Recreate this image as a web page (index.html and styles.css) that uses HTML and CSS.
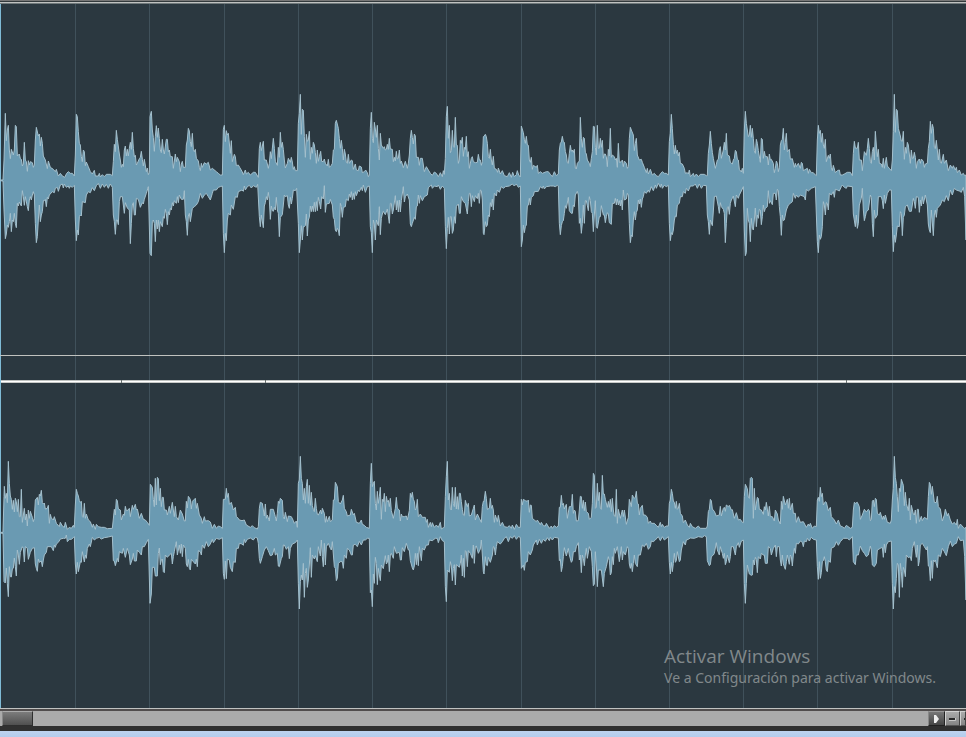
FILE: index.html
```
<!DOCTYPE html>
<html lang="es">
<head>
<meta charset="utf-8">
<title>Editor de audio</title>
<link rel="stylesheet" href="styles.css">
</head>
<body>
<main class="editor">
  <div class="topline"></div>
  <section class="tracks">
    <svg class="grid" viewBox="0 0 966 704" preserveAspectRatio="none" aria-hidden="true">
      <path d="M75.500 0V704M149.500 0V704M224.500 0V704M298.500 0V704M372.500 0V704M446.500 0V704M521.500 0V704M595.500 0V704M669.500 0V704M743.500 0V704M817.500 0V704M892.500 0V704"/>
    </svg>
    <div class="lane first">
      <svg class="wave" viewBox="0 0 2898 570" preserveAspectRatio="none" role="img" aria-label="Canal izquierdo"><path id="left"/></svg>
    </div>
    <div class="gap"></div>
    <div class="divider"><i></i><i></i><i></i></div>
    <div class="lane second">
      <svg class="wave" viewBox="0 0 2898 570" preserveAspectRatio="none" role="img" aria-label="Canal derecho"><path id="right"/></svg>
    </div>
    <aside class="notice">
      <p class="title">Activar Windows</p>
      <p class="detail">Ve a Configuración para activar Windows.</p>
    </aside>
  </section>
  <footer class="scroll">
    <button class="thumb" aria-label="Desplazar"></button>
    <div class="rail"></div>
    <button class="arrow" aria-label="Derecha"><svg viewBox="0 0 16 14"><path d="M6 3L8 3L11 7L8 11L6 11Z"/></svg></button>
    <button class="zoom" aria-label="Alejar"><svg viewBox="0 0 14 14"><path class="hi" d="M4 8.500H10.500V6"/><path d="M4 6H10V8H4Z"/></svg></button>
    <button class="zoom cut" aria-label="Acercar"><svg viewBox="0 0 14 14"><path d="M4 6H10V8H4Z"/></svg></button>
  </footer>
  <div class="shade"></div>
  <div class="taskbar"></div>
</main>
<script src="wave.js"></script>
</body>
</html>
```
FILE: styles.css
```
* { box-sizing: border-box; }
body { margin: 0; background: #2b3840; font-family: "Noto Sans", "Open Sans", sans-serif; }
button { padding: 0; border: 0; }
svg { display: block; }
.editor { display: flex; flex-direction: column; min-height: 100vh; overflow: hidden; }
.topline { height: 4px; background: linear-gradient(#777 0 1px, #333a3c 1px 2px, #c0c2c1 2px 3px, #70797b 3px); }
.tracks { position: relative; flex: 1; display: flex; flex-direction: column; border-left: 1px solid #7fbbd6; background: #2b3840; }
.grid { position: absolute; top: 0; left: -1px; width: calc(100% + 1px); height: 100%; fill: none; stroke: #40515b; stroke-width: 1; }
.lane { position: relative; display: flex; flex-direction: column; margin-left: -1px; }
.first { flex: 351; padding-top: 76px; border-bottom: 1px solid #c0c2bf; }
.second { flex: 325; padding-top: 57px; }
.wave { width: 100%; height: 190px; fill: #6a9ab2; stroke: #a4c0cd; stroke-width: 1px; stroke-linejoin: round; }
.wave path { vector-effect: non-scaling-stroke; }
.gap { height: 24px; }
.divider { position: relative; height: 3px; display: grid; grid-template-columns: 121fr 144fr 581fr 119fr; background: linear-gradient(#bfc2c0 0 1px, #fff 1px 2px, #c8cac8 2px); }
.divider i { border-right: 1px solid #68706f; }
.notice { position: absolute; right: 30px; bottom: 20px; color: #81888b; }
.notice p { margin: 0; white-space: nowrap; }
.title { font-size: 19px; line-height: 24px; font-family: "Open Sans", sans-serif; }
.detail { font-size: 14px; line-height: 20px; font-family: "Noto Sans", sans-serif; }
.scroll { display: flex; height: 18px; padding-left: 2px; border-top: 1px solid #c0c2c1; background: #ababab; box-shadow: inset 0 2px #514d4d; padding-top: 2px; }
.thumb { width: 31px; border: 1px solid #2e2e2e; border-top-color: #aaa; border-left-color: #888; background: linear-gradient(#7c7c7c, #505050); }
.rail { flex: 1; background: #ababab; }
.arrow { width: 17px; border: 1px solid #222; border-top-color: #999; border-left-color: #888; background: linear-gradient(#777, #454545); }
.arrow svg { width: 16px; height: 14px; margin: -1px; fill: #eee; }
.zoom { width: 15px; border: 1px solid #d0d0d0; border-right-color: #444; border-bottom-color: #555; background: linear-gradient(#aaa, #858585); overflow: hidden; }
.zoom svg { width: 14px; height: 14px; margin: -1px; fill: #292929; }
.zoom .hi { fill: none; stroke: #c8c8c8; }
.cut { width: 6px; }
.shade { height: 5px; background: #303030; }
.taskbar { height: 6px; background: linear-gradient(#bed3ef, #b3ccec); }
```
FILE: wave.js
```
// Each segment: [x offset, upper peaks, lower peaks], three units per sample.
const left = [
[0,
"0,300 9,300 12,240 16,100 19,182 22,150 25,136 28,210 31,236 34,208 40,225 43,210 46,136 49,140 52,228 58,222 61,236 64,238 67,258 70,252 73,187 76,240 79,245 82,274 85,242 88,255 91,245 97,248 100,262 103,255 106,180 109,142 115,168 118,162 121,198 124,172 127,190 130,228 136,240 142,266 145,243 151,262 160,268 166,275 169,268 175,288 181,280 187,288 194,292 200,280 205,275 211,280 217,280 223,288 226,225 229,103 232,110 235,155 238,190 241,195 244,230 247,245 250,210 253,215 256,257 259,246 265,260 271,275 277,282 283,271 286,288 295,288 298,280 301,291 307,284 313,290 319,283 331,283 337,287 340,245 343,193 346,215 349,151 352,178 358,222 361,240 364,262 367,253 370,260 373,210 376,198 379,228 382,208 385,228 388,205 391,187 394,208 397,157 400,205 403,230 406,226 409,255 412,250 418,236 421,232 424,214 427,238 430,258 433,238 439,275 442,264 445,284 448,278 450,110 454,94 457,150 460,172 463,214 466,170 469,137 472,172 475,144 478,175 481,210 484,218 487,178 490,210 493,222 499,178 502,178 505,215 508,210 511,230 517,230 520,265 526,222 529,245 532,232 538,245 541,275 544,252 547,244 550,262 556,262 559,195 562,180 565,145 568,153 571,185 574,200 577,160 580,208 583,215 586,208 589,235 595,243 598,262 601,272 604,250 607,262 613,248 619,252 625,247 631,270 637,265 649,275 655,280 661,285 667,285 670,148 673,136 676,185 679,152 682,165 685,160 691,220 694,182 697,245 703,223 706,230 709,257 715,255 719,262",
"0,302 9,303 12,390 16,476 19,462 22,435 25,442 28,425 31,400 34,455 37,420 40,425 43,400 46,430 49,443 52,370 55,378 58,366 64,378 67,332 70,350 73,376 76,350 82,380 85,392 88,360 91,350 94,360 97,345 100,335 103,345 106,430 109,488 112,470 115,420 118,375 121,425 124,405 127,395 130,362 133,362 136,358 139,380 142,352 145,357 148,345 157,335 163,338 166,325 172,322 175,334 181,315 187,312 190,324 193,312 199,322 205,318 208,325 211,318 217,322 223,316 226,420 229,482 232,450 235,465 238,410 241,405 244,408 247,365 256,368 259,345 265,335 271,338 277,323 283,332 289,317 295,310 301,325 307,312 313,322 319,313 325,325 331,312 337,322 340,405 343,425 346,463 349,420 352,420 355,434 358,365 361,350 367,350 373,400 376,368 382,384 388,390 391,491 394,430 397,375 400,368 403,405 406,405 409,355 415,358 421,382 427,368 430,372 433,358 439,340 445,320 450,520 454,527 457,425 460,420 463,430 466,485 469,420 472,447 475,420 478,455 481,425 487,440 490,410 493,415 496,388 499,400 502,434 505,395 508,405 511,385 514,390 517,368 520,378 523,362 529,370 532,350 535,368 538,345 544,358 550,358 553,332 556,405 559,425 562,466 565,408 568,400 571,425 577,385 583,380 589,375 595,365 601,340 607,355 613,345 619,340 625,350 631,360 637,340 640,330 649,330 655,322 661,320 667,318 670,460 673,518 676,460 679,482 682,420 685,400 691,405 694,375 700,388 706,350 712,352 715,335"],
[726,
"0,274 4,284 10,270 13,282 19,277 25,285 34,277 40,277 49,292 52,205 55,187 58,212 64,184 67,240 73,240 79,265 82,250 85,215 88,236 94,175 97,205 100,244 106,256 109,202 112,232 115,157 118,202 121,187 124,208 127,240 130,264 136,250 139,235 145,247 148,232 151,246 154,268 157,260 160,272 166,272 169,130 172,100 175,43 178,163 181,88 184,91 187,170 190,232 193,163 196,184 199,180 202,154 205,238 208,202 211,220 214,187 217,195 220,218 223,250 226,210 229,244 232,230 236,214 239,244 244,245 247,237 250,250 256,258 259,238 262,262 268,256 271,250 274,210 277,208 280,130 283,121 289,145 292,175 295,205 298,181 301,205 304,240 307,208 310,222 313,247 316,250 319,223 322,250 328,240 331,242 334,268 340,252 343,270 349,272 352,258 358,261 361,278 367,275 371,270 376,278 379,290 382,285 385,145 388,97 391,175 394,188 397,127 400,147 403,172 406,136 409,205 412,240 415,160 418,195 424,205 427,200 430,210 433,208 436,193 439,208 442,175 445,207 451,208 454,245 457,232 460,243 463,214 466,237 469,235 472,210 475,250 478,243 484,263 490,244 496,265 499,250 502,225 505,175 508,151 511,172 514,192 517,162 520,168 523,232 529,232 532,256 535,235 541,235 547,275 553,260 559,270 565,280 571,286 577,276 583,280 589,290 595,278 601,290 604,272 607,283 610,235 613,110 616,79 619,175 622,136 625,218 628,212 631,151 634,200 637,202 640,112 643,195 646,196 649,250 652,240 655,181 658,190 661,172 664,229 667,202 670,208 673,169 676,230 679,215 682,265 688,235 691,230 694,245 700,248 706,247 709,223 712,240 715,240 718,256 721,245 724,170",
"0,330 4,334 7,318 10,330 16,320 22,316 28,324 34,317 43,322 47,313 52,410 55,440 58,405 64,443 67,378 70,368 73,350 76,360 79,337 82,360 85,418 88,378 91,392 94,394 97,382 100,390 103,352 106,390 109,400 112,470 115,412 121,404 124,375 127,345 130,350 136,347 139,375 142,385 145,352 148,372 151,355 154,330 160,332 164,325 169,430 172,518 175,480 178,437 181,480 184,440 187,440 190,437 193,402 196,468 199,420 202,412 205,378 208,395 211,378 214,395 217,367 220,395 223,365 226,392 229,352 232,365 236,387 239,350 244,357 247,317 250,397 253,372 262,370 265,358 271,375 274,412 277,418 280,450 283,455 286,445 289,450 292,467 295,370 298,380 301,412 304,382 310,380 313,357 319,362 322,342 325,352 328,335 331,360 334,340 337,358 340,335 343,347 349,330 352,335 358,322 361,332 364,315 370,337 376,320 382,318 385,440 388,458 391,518 394,420 397,432 400,480 403,420 409,437 412,380 415,464 418,415 421,402 424,394 430,404 436,387 442,430 445,370 448,370 451,402 454,390 460,347 463,390 466,362 469,396 472,360 475,396 478,362 484,320 487,366 490,350 496,342 502,360 505,432 508,440 511,430 517,412 520,418 523,380 526,378 529,345 532,370 535,347 541,362 547,350 556,345 559,323 568,315 571,325 577,318 586,320 589,315 595,328 601,318 604,322 607,325 610,440 613,506 616,445 619,412 622,462 625,410 628,410 631,460 634,450 637,410 640,430 643,380 646,375 649,372 652,400 655,400 658,350 664,365 670,370 676,402 679,365 682,340 685,340 688,380 691,347 697,365 700,347 706,356 709,340 712,370 715,330 718,332 721,360 724,460"],
[1452,
"0,169 4,163 7,170 10,190 13,230 16,235 19,208 22,240 25,255 28,229 31,265 37,268 41,277 43,264 49,282 55,272 61,287 70,290 76,278 82,292 86,277 91,290 97,284 100,272 104,285 109,291 112,138 118,158 121,178 124,190 127,169 130,195 133,196 136,240 139,247 142,232 145,268 148,256 157,262 160,256 163,280 169,275 175,280 187,275 193,275 199,283 205,290 211,275 217,287 223,282 226,210 229,190 232,186 235,169 238,185 241,187 244,215 247,225 250,248 253,250 256,220 259,196 262,214 265,210 268,217 271,208 274,264 277,267 280,250 286,243 289,112 292,175 295,202 298,172 301,175 304,217 307,222 310,240 316,250 319,260 322,235 325,215 328,139 331,140 334,202 337,225 340,136 343,205 346,205 349,175 352,202 355,181 358,235 361,222 364,222 367,230 370,260 373,208 376,228 379,145 382,232 385,225 391,230 394,240 397,235 400,262 403,190 406,247 412,245 415,240 418,260 421,243 427,250 430,265 433,260 436,175 439,142 442,150 448,165 451,212 454,190 457,175 460,225 466,240 472,238 475,247 481,262 487,278 490,265 493,282 499,268 505,285 511,280 517,287 523,290 529,282 535,275 541,280 547,280 553,285 556,185 559,160 562,103 565,145 568,193 571,222 574,196 577,220 580,210 583,228 586,217 589,250 595,252 601,265 604,280 610,278 613,282 616,270 619,290 628,280 631,290 637,282 643,290 649,283 661,283 667,287 670,287 673,220 676,195 679,154 682,190 685,217 688,235 694,265 700,240 703,238 706,210 709,200 712,235 718,210",
"0,464 4,425 7,440 10,435 13,405 16,410 19,368 22,380 25,357 28,390 31,340 37,348 40,330 46,337 52,320 58,325 64,320 76,318 85,312 91,318 97,312 103,322 109,318 112,500 115,480 118,435 121,458 124,440 127,435 130,378 133,375 136,355 139,375 142,352 148,347 151,335 163,334 169,320 175,325 178,318 181,327 187,320 199,318 208,318 214,320 220,316 223,318 226,430 229,464 232,437 235,425 238,422 241,400 244,377 247,385 253,352 256,392 262,400 265,400 268,375 271,380 274,345 280,334 283,345 286,430 289,415 292,460 295,430 298,375 301,430 304,362 307,362 313,392 316,350 319,362 322,395 325,400 328,455 331,405 334,362 337,440 340,445 346,410 349,410 352,377 358,405 361,405 364,428 367,410 370,398 373,402 376,428 382,433 385,370 391,370 394,355 397,375 400,357 403,375 406,362 409,378 412,360 415,390 418,330 421,360 427,357 430,340 433,345 436,430 439,488 442,465 445,470 448,420 451,395 454,420 457,397 460,390 463,360 466,372 469,357 472,382 475,357 478,350 481,335 487,340 493,330 496,337 502,320 508,332 514,315 517,325 523,310 529,322 532,312 535,325 541,316 547,320 553,316 556,430 559,482 562,458 565,464 568,450 571,420 574,408 577,410 580,375 586,370 589,350 595,350 598,335 604,340 607,325 613,333 619,318 628,318 634,312 640,325 646,312 652,325 658,316 667,317 670,405 673,425 676,463 679,420 685,437 691,350 697,348 703,380 706,400 709,368 712,380 718,388"],
[2172,
"1,187 4,210 7,160 10,225 16,228 19,247 25,252 28,240 31,235 34,211 37,215 40,238 43,240 46,268 52,276 55,265 58,280 61,150 64,94 67,130 70,150 73,170 76,165 79,136 82,172 85,145 88,175 91,212 94,220 97,178 100,190 103,212 109,247 112,175 115,178 118,235 121,214 124,230 130,230 133,255 136,222 139,240 142,238 148,250 151,278 154,265 157,243 160,250 163,275 166,262 169,195 172,182 175,178 178,145 181,210 184,187 187,160 190,215 196,208 199,238 205,236 211,262 214,250 217,260 223,250 229,265 232,247 235,250 238,272 250,265 253,280 256,268 262,278 268,278 274,285 277,287 280,180 283,136 286,160 289,151 292,187 295,160 298,195 301,205 304,178 307,245 313,226 316,235 319,222 322,262 325,272 328,256 334,278 340,272 346,270 349,285 355,285 361,282 370,277 379,277 385,287 388,220 391,184 394,204 400,205 403,187 406,240 412,240 415,272 421,215 427,226 430,205 433,175 436,205 439,244 442,250 445,215 448,202 451,240 454,154 457,195 460,230 463,208 466,250 472,252 475,262 478,235 481,265 487,232 490,258 496,265 502,272 505,240 508,155 511,43 514,157 517,88 520,92 523,145 529,168 532,183 535,184 538,154 541,238 544,202 547,220 550,187 553,195 559,250 562,210 565,235 568,235 571,217 574,232 577,265 580,245 586,237 589,250 592,237 598,244 601,262 604,252 610,250 613,205 616,185 619,124 622,160 625,133 628,145 631,202 634,206 637,181 640,210 643,240 646,208 649,247 652,250 658,223 661,250 667,240 673,272 679,255 685,265 688,257 694,270 697,262 700,278 706,270 712,285 718,280 722,287 726,285",
"1,400 4,488 7,430 10,382 13,380 16,403 19,370 22,360 25,355 28,348 34,380 37,345 43,355 46,345 52,333 58,320 61,450 64,527 67,518 70,385 73,420 76,430 79,485 82,415 85,445 88,450 91,420 94,384 97,440 100,405 103,415 106,388 109,390 112,434 115,410 118,375 121,395 124,385 130,380 133,332 136,370 139,362 145,374 148,340 154,340 157,360 160,328 163,332 166,380 169,410 172,466 175,405 178,422 181,420 187,390 193,375 199,370 205,365 208,340 214,355 217,345 223,352 229,345 241,350 244,360 247,328 253,333 262,325 274,320 280,485 283,518 286,465 289,478 292,470 295,440 298,365 301,375 304,405 307,368 310,370 313,390 316,340 322,345 328,335 331,352 334,328 340,330 346,333 352,320 355,315 361,322 367,325 370,318 385,320 388,402 394,440 397,405 400,445 403,430 406,375 412,355 415,325 418,390 421,422 424,410 427,395 433,390 439,345 442,352 445,430 448,470 451,390 454,415 460,405 463,350 472,350 475,362 478,386 481,345 484,370 490,340 496,330 502,330 505,440 508,515 511,465 514,487 517,465 520,438 526,440 529,395 532,400 535,467 538,412 541,405 544,380 550,375 556,394 562,394 568,355 571,365 574,385 577,350 583,352 586,397 589,360 592,378 595,350 598,372 604,345 610,375 613,432 616,450 619,458 622,390 628,467 631,405 634,390 637,412 640,385 649,375 655,360 661,365 667,347 673,362 679,330 685,345 691,325 697,330 706,333 712,337 718,322 722,350 726,480"]
];
const right = [
[0,
"0,277 9,277 12,170 13,139 16,175 19,160 22,188 25,64 28,130 31,168 34,178 37,208 40,181 43,216 46,175 49,185 52,215 55,178 58,230 61,230 64,148 67,247 73,205 76,240 79,222 82,258 85,210 88,235 91,214 97,232 100,245 103,235 106,180 112,172 115,195 118,163 121,168 124,151 127,188 130,192 133,189 136,207 142,205 145,196 148,250 151,223 154,234 160,240 163,230 169,250 178,260 181,247 187,258 193,262 196,247 202,268 208,262 214,265 220,256 223,262 226,195 229,148 232,160 235,168 238,182 241,187 244,184 247,230 250,232 253,190 256,235 259,222 265,240 271,245 277,262 280,252 286,268 289,253 295,260 304,262 313,262 322,266 337,265 343,208 346,225 349,178 352,182 355,207 361,210 364,240 370,222 373,226 376,199 379,212 385,210 388,205 391,230 397,196 400,208 406,193 409,210 412,207 418,235 424,220 430,238 436,240 442,247 448,256 451,133 457,142 460,178 463,200 466,115 469,195 472,112 475,116 478,182 481,145 484,200 487,172 490,172 493,210 499,210 502,225 508,199 511,220 517,187 520,210 523,230 526,199 529,230 535,240 541,210 547,222 553,243 556,243 559,184 562,204 565,169 571,178 574,207 577,184 583,178 586,175 589,205 592,190 598,225 604,235 607,250 613,230 616,243 625,242 631,246 637,265 643,253 649,265 655,258 661,260 667,265 670,178 676,178 679,145 682,172 685,160 688,193 694,187 700,210 706,202 709,230 715,235 718,240",
"0,279 9,280 12,425 16,429 19,384 22,430 25,470 28,380 31,410 34,411 37,387 40,384 43,354 46,380 49,408 52,330 55,345 58,373 61,337 67,320 70,325 73,366 76,320 82,325 85,358 91,337 97,325 103,323 106,372 109,385 112,394 115,357 118,367 124,363 127,380 130,360 133,345 139,337 142,320 154,320 160,332 163,315 166,322 169,312 175,307 181,297 190,295 196,295 199,285 202,305 208,298 214,298 220,293 223,290 226,372 229,402 232,367 235,395 241,365 244,367 247,335 253,366 256,345 259,355 262,325 268,312 271,320 277,292 283,300 289,295 298,292 304,297 313,293 325,291 337,288 340,362 343,363 346,377 352,355 355,366 358,335 367,340 370,325 376,352 382,325 388,345 391,374 397,357 400,340 403,363 409,363 412,330 418,337 424,345 427,320 433,320 439,308 445,298 450,490 454,462 457,382 463,382 466,408 472,408 475,340 478,324 481,374 484,360 487,357 490,395 493,398 496,345 502,352 508,345 514,340 517,372 520,350 523,335 529,305 532,345 538,315 541,340 544,312 547,350 550,315 556,325 559,372 562,380 565,358 568,385 571,390 574,358 580,365 586,372 589,357 592,380 595,332 601,335 604,345 607,315 613,325 619,305 625,320 631,312 637,298 640,308 649,295 658,298 667,293 670,400 673,418 676,363 679,416 682,357 688,360 691,382 697,395 700,365 706,367 709,325 715,325 718,310"],
[726,
"0,242 7,240 13,255 25,262 31,257 37,263 46,267 49,260 52,205 55,187 61,190 67,228 70,192 73,235 76,225 82,243 85,208 94,208 100,230 103,243 106,220 109,184 112,190 115,175 121,181 124,230 127,237 130,217 136,245 139,228 148,230 154,242 157,250 163,243 166,262 169,130 172,120 175,49 178,115 181,130 184,180 187,145 190,190 193,140 196,118 199,190 202,136 205,196 208,157 211,197 214,208 217,215 220,175 223,205 226,223 229,225 236,210 239,222 241,205 247,220 250,247 253,229 256,245 262,229 265,245 271,240 274,180 277,180 280,127 286,140 289,185 295,192 301,180 304,166 307,205 313,215 316,228 325,225 328,208 334,225 337,220 343,247 352,250 358,240 361,253 367,256 373,262 382,265 385,130 388,70 391,140 394,130 397,124 400,190 403,210 406,154 409,190 412,170 415,142 418,238 421,178 424,185 427,160 430,215 433,169 436,185 439,181 442,200 445,175 448,212 454,235 460,205 463,172 466,205 472,210 475,243 478,222 481,230 487,230 493,228 496,240 502,212 505,160 508,172 511,157 514,178 517,184 520,210 523,205 526,178 529,230 535,222 541,232 550,232 553,247 556,238 559,262 565,247 568,260 571,248 577,262 583,255 589,262 595,247 598,267 604,263 607,262 610,170 613,110 616,64 619,180 622,160 625,207 628,210 631,142 634,190 637,200 640,142 643,207 646,170 649,208 652,160 655,160 658,185 661,208 664,225 667,227 670,181 673,192 676,200 679,190 682,228 688,225 694,205 697,195 700,240 706,222 712,235 718,247 721,200 724,184",
"0,312 4,316 7,298 10,308 16,298 25,294 34,300 40,292 46,294 49,310 52,355 55,370 61,350 67,330 73,320 79,332 85,347 91,345 97,325 100,345 106,340 109,378 112,380 118,355 121,350 124,315 127,315 133,328 139,320 142,356 145,325 151,312 160,308 166,300 169,430 172,507 175,425 178,405 181,420 184,370 187,472 190,400 193,385 196,442 199,420 202,375 205,323 208,412 211,345 217,357 220,347 226,365 229,320 235,348 238,300 241,350 244,380 247,310 250,375 253,320 259,310 265,325 268,330 271,305 277,380 280,385 283,422 286,415 289,370 295,365 301,365 304,385 307,345 313,355 316,325 322,330 328,345 331,345 334,315 340,313 346,320 352,304 358,315 364,300 370,300 376,295 382,295 385,458 388,450 391,500 394,402 397,430 400,352 403,370 406,434 409,385 412,405 415,422 418,375 424,386 430,347 433,372 436,367 439,345 442,395 445,345 448,340 454,355 457,320 463,340 472,337 475,360 478,360 481,323 487,335 493,310 499,330 502,330 505,362 511,384 514,390 517,378 520,340 523,374 526,340 529,377 532,320 538,362 541,325 547,330 553,315 559,315 562,300 571,302 580,295 586,295 589,308 595,290 601,302 607,305 610,440 613,485 616,390 622,397 625,365 628,378 631,422 634,385 637,374 640,435 643,374 652,382 655,370 658,345 661,408 664,355 667,412 670,332 673,335 676,380 679,332 685,340 691,355 694,315 697,370 700,320 703,318 709,340 715,327 718,300 721,345 724,395"],
[1452,
"0,185 4,154 7,175 10,208 16,205 19,175 22,205 25,196 28,210 31,247 34,225 40,245 43,226 49,258 55,247 61,260 70,262 76,257 82,265 85,255 91,268 97,253 103,262 109,262 112,178 115,195 118,178 124,182 130,184 133,180 136,217 139,195 142,196 145,235 151,240 157,245 160,240 169,254 172,247 178,257 184,258 187,250 196,265 202,258 205,265 211,257 217,262 223,258 226,202 229,202 232,166 235,195 238,190 241,207 247,193 250,235 256,200 262,200 265,163 268,220 271,210 274,214 277,243 283,242 286,210 289,169 292,170 295,205 298,181 301,212 304,186 307,215 313,220 316,238 322,232 325,190 328,100 331,106 334,205 337,202 340,130 343,182 346,157 349,205 352,208 355,106 358,162 361,162 364,178 370,202 373,184 376,202 379,178 382,215 385,175 388,210 391,228 394,230 397,148 400,250 403,208 409,235 415,210 418,230 421,210 427,253 433,232 436,178 442,200 445,165 448,170 451,175 454,172 457,154 460,190 463,192 466,225 469,205 475,196 478,225 484,225 490,232 493,250 499,243 502,250 511,250 517,256 523,262 529,247 532,260 535,253 541,262 547,258 553,258 556,190 559,180 562,148 565,160 568,183 571,187 574,205 577,184 580,208 583,205 586,190 589,220 595,228 598,248 604,240 610,255 616,262 619,250 625,260 634,265 643,258 649,265 667,265 670,258 673,215 676,208 679,178 682,182 685,207 691,214 697,228 703,226 706,225 709,199 712,228 718,205",
"0,402 4,350 7,375 10,377 13,352 19,367 25,345 28,320 31,322 34,345 37,320 40,305 49,312 55,305 61,295 67,290 73,305 79,290 85,295 91,287 97,298 103,290 109,292 112,385 118,375 121,391 124,367 130,365 133,335 139,345 145,330 148,315 157,300 160,315 166,298 172,310 178,298 184,304 190,293 196,302 199,292 205,300 211,292 223,294 226,362 229,358 232,395 235,380 238,350 241,323 247,348 253,325 256,345 262,367 265,362 268,335 274,335 277,320 283,308 286,360 289,345 292,398 295,345 298,355 301,377 304,345 307,325 310,355 316,320 322,335 325,380 328,437 331,432 334,335 337,378 340,440 343,390 352,390 358,440 361,400 367,380 373,350 376,362 379,405 382,398 385,350 388,374 391,325 394,340 400,320 406,365 412,320 415,360 418,335 424,345 430,320 433,325 436,372 439,385 442,370 445,395 448,370 451,345 454,370 460,380 463,345 469,345 475,315 481,320 487,310 493,328 499,320 502,303 508,305 514,300 523,290 529,302 535,290 541,300 553,290 556,367 559,402 562,367 565,395 568,370 571,340 574,367 577,362 580,335 586,365 589,360 592,330 598,305 604,315 607,300 613,298 619,294 631,295 643,290 655,292 661,287 667,290 670,362 676,377 679,374 682,350 688,345 691,340 697,308 700,330 706,345 709,320 715,340 718,355"],
[2172,
"1,202 4,214 7,195 13,200 16,196 22,210 25,209 31,235 37,218 43,240 49,238 55,247 58,248 61,170 64,133 70,146 73,172 76,175 79,115 82,112 85,115 88,235 91,145 94,210 100,172 103,175 106,208 112,210 118,223 121,200 124,210 127,187 133,228 136,199 139,230 145,230 151,243 154,210 160,222 163,240 169,252 172,184 175,208 178,169 184,195 190,178 193,205 196,175 199,210 205,190 208,220 214,220 217,247 223,230 229,247 238,245 247,262 253,252 256,258 259,250 265,265 271,258 277,260 280,180 283,172 286,184 289,142 292,170 295,160 298,195 304,185 307,187 313,212 319,202 322,230 331,240 337,252 343,240 349,258 355,260 361,265 367,256 379,265 385,262 388,210 391,187 394,190 400,187 406,200 409,238 415,225 421,208 427,216 433,208 436,212 439,242 442,238 445,184 448,180 451,200 454,175 457,178 460,220 466,225 469,217 475,238 478,228 481,238 484,225 490,247 499,250 502,240 505,180 508,145 511,49 514,112 517,130 520,170 523,215 526,145 529,155 532,118 538,136 541,197 544,157 547,190 553,212 556,175 559,240 562,196 568,222 571,225 574,210 577,250 580,208 583,208 586,245 592,229 595,242 601,232 610,238 613,170 616,127 619,133 622,163 625,139 631,187 637,188 640,169 643,200 649,207 655,243 661,225 664,208 670,228 673,220 679,240 685,252 691,247 697,255 700,238 703,265 709,252 718,262 722,265 726,262",
"1,340 4,374 7,365 10,345 16,368 19,350 22,320 28,320 34,345 37,320 43,308 46,322 52,303 58,300 61,430 64,490 67,430 70,375 76,402 82,406 85,405 88,360 91,375 94,352 97,358 100,398 103,350 109,357 112,340 118,345 121,345 124,370 130,370 133,320 139,325 142,345 148,325 154,315 157,350 160,320 166,320 169,360 172,378 175,345 178,372 184,388 187,365 190,345 196,373 199,345 202,350 205,378 208,345 211,325 214,340 217,310 223,312 229,303 235,307 238,320 241,303 247,305 250,295 256,303 262,292 268,298 277,300 280,380 283,418 286,365 289,415 292,398 295,365 298,362 301,350 304,365 307,390 310,395 313,362 319,367 322,325 331,320 337,305 343,316 349,305 358,295 370,295 376,300 385,290 388,365 394,374 397,345 403,345 409,318 415,332 421,340 427,350 433,345 439,318 442,330 445,375 451,380 457,370 460,330 469,325 475,322 478,352 481,312 484,338 487,315 493,305 502,303 505,430 508,507 511,440 514,458 517,415 520,370 523,375 526,472 529,370 532,395 535,442 538,382 541,390 544,410 547,345 553,353 559,350 562,362 565,325 571,305 577,352 580,315 583,378 586,362 589,315 595,310 601,320 607,330 610,320 613,378 616,380 619,422 622,362 625,415 628,360 631,365 634,360 640,383 643,345 649,350 655,325 661,335 667,347 673,320 679,303 685,320 691,312 697,310 703,290 709,302 718,300 722,350 726,480"]
];

function outline(segments) {
  const points = (column) => segments.flatMap((segment) =>
    segment[column].split(" ").map((pair) => {
      const [x, y] = pair.split(",").map(Number);
      return [x + segment[0], y];
    }));
  const line = points(1).concat(points(2).reverse());
  return "M" + line.map((p) => p.join(" ")).join("L") + "Z";
}
document.getElementById("left").setAttribute("d", outline(left));
document.getElementById("right").setAttribute("d", outline(right));
```
